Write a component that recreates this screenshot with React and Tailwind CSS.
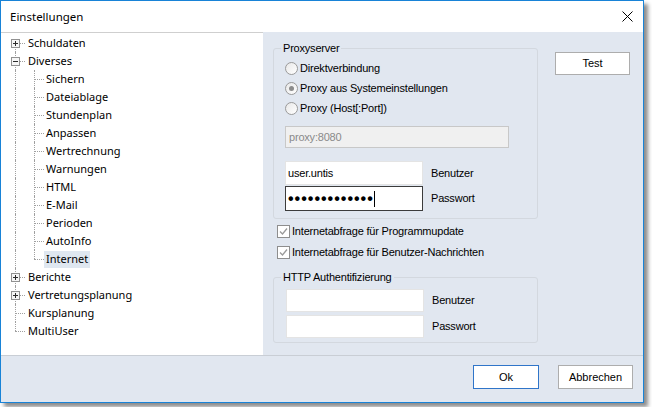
import React from "react";

const treeFont = { fontFamily: '"Noto Sans", "Open Sans", sans-serif' };
const uiFont = { fontFamily: '"Liberation Sans", Arial, sans-serif' };

const rows = [
  { label: "Schuldaten", level: 0, exp: "+", pos: "first" },
  { label: "Diverses", level: 0, exp: "-", pos: "mid" },
  { label: "Sichern", level: 1, pos: "mid" },
  { label: "Dateiablage", level: 1, pos: "mid" },
  { label: "Stundenplan", level: 1, pos: "mid" },
  { label: "Anpassen", level: 1, pos: "mid" },
  { label: "Wertrechnung", level: 1, pos: "mid" },
  { label: "Warnungen", level: 1, pos: "mid" },
  { label: "HTML", level: 1, pos: "mid" },
  { label: "E-Mail", level: 1, pos: "mid" },
  { label: "Perioden", level: 1, pos: "mid" },
  { label: "AutoInfo", level: 1, pos: "mid" },
  { label: "Internet", level: 1, pos: "last", selected: true },
  { label: "Berichte", level: 0, exp: "+", pos: "mid" },
  { label: "Vertretungsplanung", level: 0, exp: "+", pos: "mid" },
  { label: "Kursplanung", level: 0, pos: "mid" },
  { label: "MultiUser", level: 0, pos: "last" },
];

function Connector({ pos, horizontal, exp, passThrough }) {
  return (
    <div className="relative w-[19px] h-full shrink-0">
      {passThrough ? (
        <div className="absolute left-[9px] top-0 bottom-0 border-l border-dotted border-[#a0a0a0]" />
      ) : (
        <>
          {pos === "first" && (
            <div className="absolute left-[9px] top-1/2 bottom-0 border-l border-dotted border-[#a0a0a0]" />
          )}
          {pos === "mid" && (
            <div className="absolute left-[9px] top-0 bottom-0 border-l border-dotted border-[#a0a0a0]" />
          )}
          {pos === "last" && (
            <div className="absolute left-[9px] top-0 h-1/2 border-l border-dotted border-[#a0a0a0]" />
          )}
        </>
      )}
      {horizontal && (
        <div className="absolute left-[9px] right-0 top-[9px] border-t border-dotted border-[#a0a0a0]" />
      )}
      {exp && (
        <div className="absolute left-[5px] top-[5px] w-[9px] h-[9px] border border-[#919191] bg-[#f6f6f6] flex items-center justify-center">
          <div className="relative w-[5px] h-[5px]">
            <div className="absolute left-0 right-0 top-[2px] h-px bg-[#2b2b2b]" />
            {exp === "+" && (
              <div className="absolute top-0 bottom-0 left-[2px] w-px bg-[#2b2b2b]" />
            )}
          </div>
        </div>
      )}
    </div>
  );
}

function TreeRow({ row }) {
  return (
    <div className="flex h-[18px] items-stretch">
      {row.level === 0 ? (
        <Connector pos={row.pos} horizontal exp={row.exp} />
      ) : (
        <>
          <Connector passThrough />
          <Connector pos={row.pos} horizontal />
        </>
      )}
      <div className={`flex items-center ${row.level === 0 ? "ml-[1px]" : ""}`}>
        <span
          className={`px-[2px] h-[17px] leading-[16px] text-[11px] text-black whitespace-nowrap ${
            row.selected ? "bg-[#dfe7f0]" : ""
          }`}
        >
          {row.label}
        </span>
      </div>
    </div>
  );
}

function Radio({ checked, label }) {
  return (
    <div className="flex items-center h-[20px]">
      <div className="w-[13px] h-[13px] rounded-full border border-[#9a9a9a] bg-gradient-to-br from-[#e8e8e8] to-white flex items-center justify-center">
        {checked && <div className="w-[5px] h-[5px] rounded-full bg-[#8c8c8c]" />}
      </div>
      <span className="ml-[2px] text-[11px] tracking-[-0.2px] text-black">{label}</span>
    </div>
  );
}

function Check({ label }) {
  return (
    <div className="flex items-center h-[21px]">
      <div className="w-[13px] h-[13px] border border-[#8e8e8e] bg-white flex items-center justify-center">
        <svg width="9" height="9" viewBox="0 0 9 9">
          <path d="M1 4.5 L3.5 7 L8 1.5" fill="none" stroke="#9a9a9a" strokeWidth="1.3" />
        </svg>
      </div>
      <span className="ml-[2px] text-[11px] tracking-[-0.2px] text-black">{label}</span>
    </div>
  );
}

function Field({ children, focused, className = "" }) {
  return (
    <div
      className={`w-[138px] bg-white border ${
        focused ? "border-[#3c3c3c]" : "border-[#e4e4e4]"
      } flex items-center px-[2px] ${className}`}
    >
      {children}
    </div>
  );
}

export default function App() {
  return (
    <div className="w-[652px] h-[407px] bg-white" style={uiFont}>
      <div className="w-[644px] h-[403px] border border-[#1883d7] bg-[#e1e7f0] flex flex-col shadow-[4px_4px_4px_rgba(0,0,0,0.45)]">
        {/* Title bar */}
        <div className="h-[31px] bg-white flex items-center justify-between pl-[9px] pr-[10px]" style={treeFont}>
          <span className="text-[11.5px] text-black">Einstellungen</span>
          <svg width="11" height="11" viewBox="0 0 11 11">
            <path d="M0.5 0.5 L10.5 10.5 M10.5 0.5 L0.5 10.5" stroke="#000" strokeWidth="1" />
          </svg>
        </div>

        {/* Main area */}
        <div className="h-[324px] flex border-b border-[#c9ced5]">
          {/* Tree */}
          <div className="w-[262px] bg-white border-t border-[#cfcfcf] pl-[5px] pt-px" style={treeFont}>
            {rows.map((r) => (
              <TreeRow key={r.label} row={r} />
            ))}
          </div>

          {/* Right */}
          <div className="flex-1 flex pl-[10px] pt-[9px]">
            <div className="w-[265px] flex flex-col">
              <fieldset className="border border-[#d3d8df] rounded-[3px] pb-[7px]">
                <legend className="ml-[7px] px-[2px] text-[11px] tracking-[-0.2px] leading-[14px] text-black">Proxyserver</legend>
                <div className="pl-[11px] flex flex-col">
                  <div className="mt-[3px]">
                    <Radio label="Direktverbindung" />
                    <Radio checked label="Proxy aus Systemeinstellungen" />
                    <Radio label="Proxy (Host[:Port])" />
                  </div>
                  <div className="mt-[8px] w-[224px] h-[22px] bg-[#f0f0f0] border border-[#c8c8c8] flex items-center px-[3px] text-[11px] tracking-[-0.2px] text-[#8a8a8a]">
                    proxy:8080
                  </div>
                  <div className="mt-[13px] flex items-center">
                    <Field className="h-[24px]">
                      <span className="text-[11px] tracking-[-0.2px] text-black">user.untis</span>
                    </Field>
                    <span className="ml-[8px] text-[11px] tracking-[-0.2px] text-black">Benutzer</span>
                  </div>
                  <div className="mt-[1px] flex items-center">
                    <Field focused className="h-[25px]">
                      <span className="text-[16px] leading-[16px] tracking-[1px] text-black font-bold">•••••••••••••</span>
                      <span className="w-px h-[16px] bg-black" />
                    </Field>
                    <span className="ml-[8px] text-[11px] tracking-[-0.2px] text-black">Passwort</span>
                  </div>
                </div>
              </fieldset>

              <div className="mt-[2px] pl-[4px]">
                <Check label="Internetabfrage für Programmupdate" />
                <Check label="Internetabfrage für Benutzer-Nachrichten" />
              </div>

              <fieldset className="mt-[7px] border border-[#d3d8df] rounded-[3px] pb-[4px]">
                <legend className="ml-[7px] px-[2px] text-[11px] tracking-[-0.2px] leading-[14px] text-black">HTTP Authentifizierung</legend>
                <div className="pl-[12px] pt-[5px] flex flex-col gap-[3px]">
                  <div className="flex items-center">
                    <Field className="h-[23px]" />
                    <span className="ml-[8px] text-[11px] tracking-[-0.2px] text-black">Benutzer</span>
                  </div>
                  <div className="flex items-center">
                    <Field className="h-[23px]" />
                    <span className="ml-[8px] text-[11px] tracking-[-0.2px] text-black">Passwort</span>
                  </div>
                </div>
              </fieldset>
            </div>

            <div className="ml-[17px] pt-[11px]">
              <button className="w-[75px] h-[23px] bg-white border border-[#adadad] text-[11px] text-black flex items-center justify-center">
                Test
              </button>
            </div>
          </div>
        </div>

        {/* Footer */}
        <div className="flex-1 flex justify-end items-start pt-[9px] pr-[10px] gap-[19px]">
          <button className="w-[66px] h-[24px] bg-white border border-[#2f75c9] text-[11px] text-black flex items-center justify-center">
            Ok
          </button>
          <button className="w-[75px] h-[24px] bg-white border border-[#adadad] text-[11px] text-black flex items-center justify-center">
            Abbrechen
          </button>
        </div>
      </div>
    </div>
  );
}
